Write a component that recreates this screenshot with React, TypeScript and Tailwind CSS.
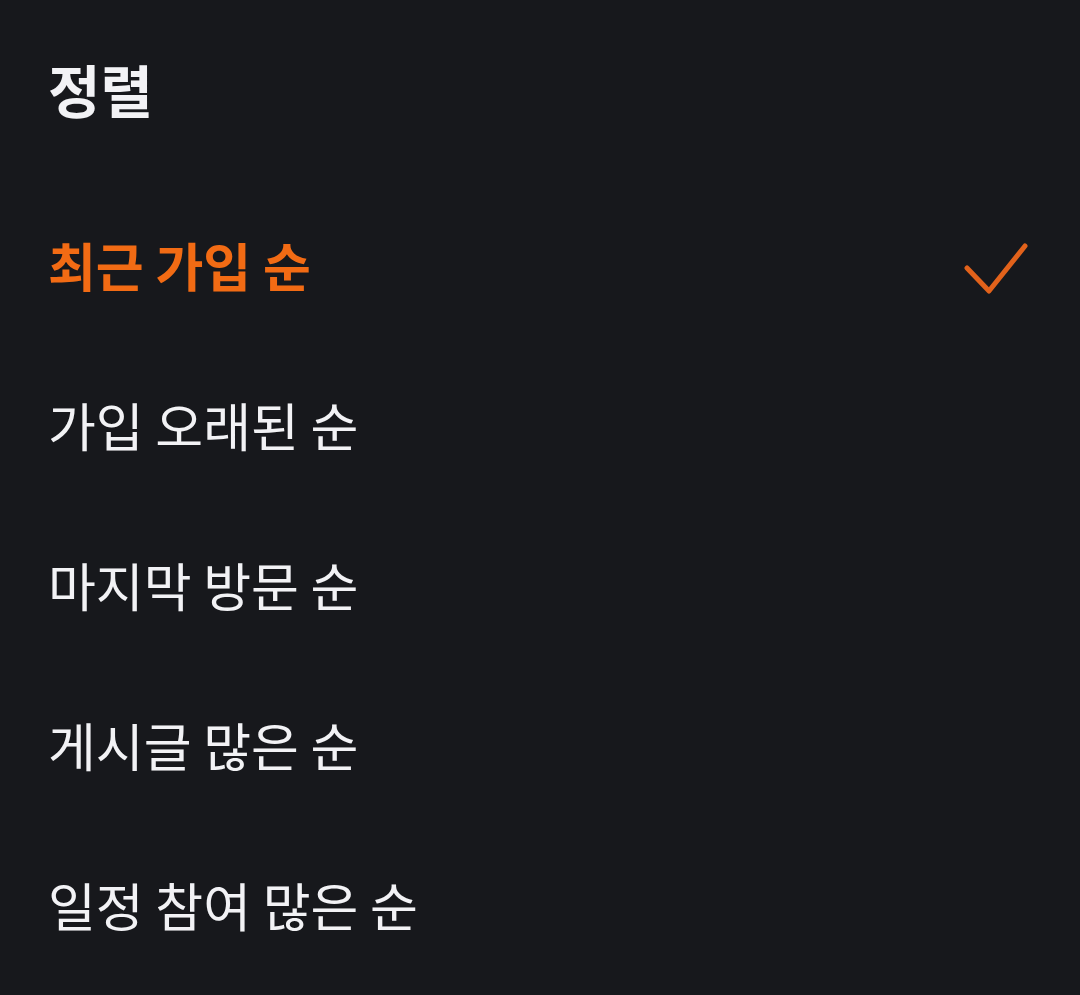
import React from "react";

const items = ["최근 가입 순", "가입 오래된 순", "마지막 방문 순", "게시글 많은 순", "일정 참여 많은 순"];

export default function App() {
  return (
    <div
      className="w-[1080px] h-[995px] bg-[#17181c] pl-[48px] pr-[52px] overflow-hidden"
      style={{ fontFamily: '"Noto Sans CJK KR", "Noto Sans", sans-serif' }}
    >
      <div className="pt-[58px] h-[118px] text-[57px] leading-[60px] font-bold text-[#f2f2f5]">정렬</div>
      <div className="mt-[67px] flex flex-col">
        {items.map((t, i) => (
          <div key={t} className="h-[160px] flex items-center justify-between">
            <span
              className={
                i === 0
                  ? "text-[52px] leading-[60px] font-bold text-[#f26b14]"
                  : "text-[52px] leading-[60px] font-normal text-[#f2f2f5]"
              }
            >
              {t}
            </span>
            {i === 0 && (
              <svg className="mt-[6px]" width="64" height="56" viewBox="0 0 64 56" fill="none">
                <path
                  d="M3 28 L25 51 L61 6"
                  stroke="#e2621b"
                  strokeWidth="5"
                  strokeLinecap="round"
                  strokeLinejoin="round"
                />
              </svg>
            )}
          </div>
        ))}
      </div>
    </div>
  );
}
